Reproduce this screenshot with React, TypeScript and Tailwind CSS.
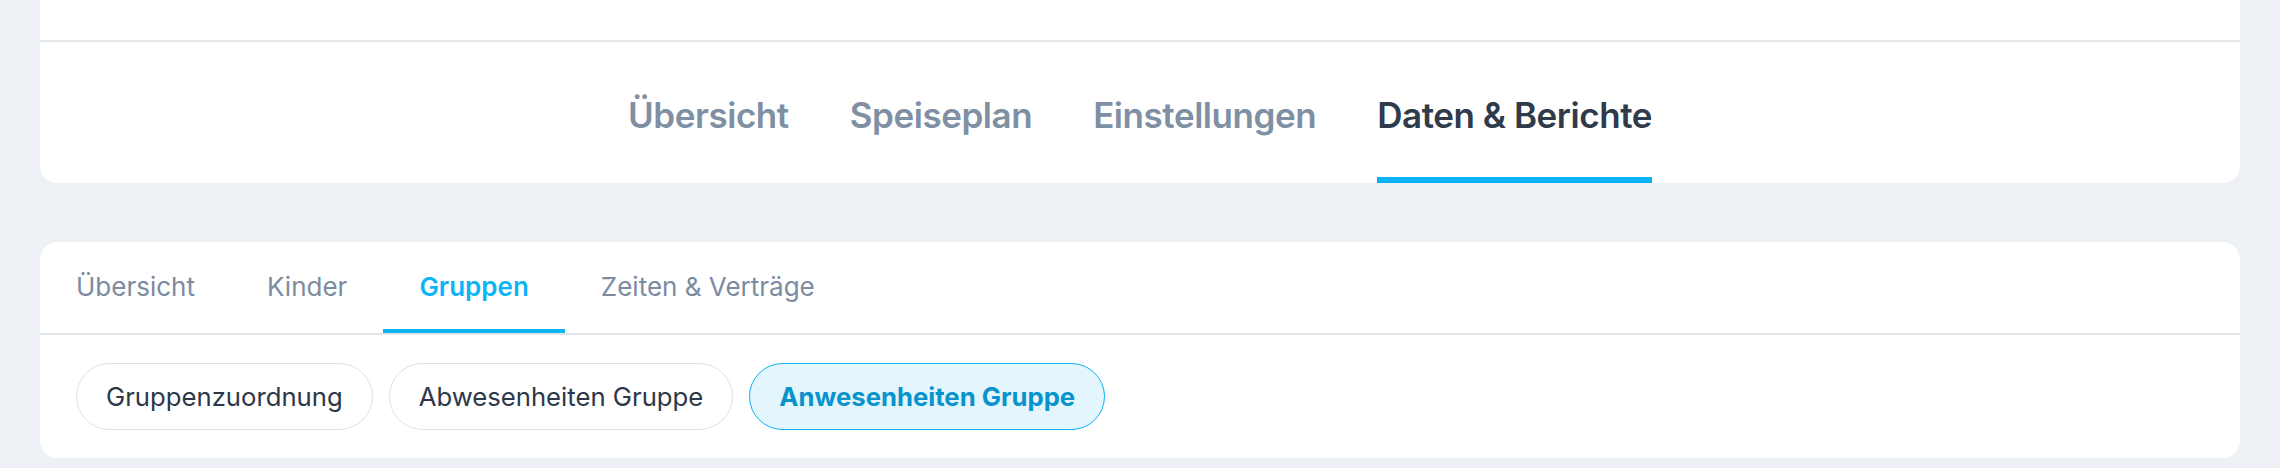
import React from "react";

const mainTabs = ["Übersicht", "Speiseplan", "Einstellungen", "Daten & Berichte"];
const subTabs = ["Übersicht", "Kinder", "Gruppen", "Zeiten & Verträge"];
const pills = ["Gruppenzuordnung", "Abwesenheiten Gruppe", "Anwesenheiten Gruppe"];

export default function App() {
  return (
    <div
      className="h-[468px] w-full bg-[#edf0f5] px-[40px] overflow-hidden"
      style={{ fontFamily: "Inter, 'Noto Sans', sans-serif" }}
    >
      {/* Top card */}
      <div className="bg-white rounded-b-[17px]">
        <div className="h-[42px] border-b-2 border-[#e5e8ec]" />
        <nav className="flex justify-center gap-[61px]">
          {mainTabs.map((t, i) => {
            const active = i === 3;
            return (
              <div
                key={t}
                className={
                  active
                    ? "pt-[52px] pb-[41px] border-b-[6px] border-[#0bb4f7] text-[35px] leading-[42px] font-semibold text-[#2f3a4b] tracking-[-0.45px]"
                    : "pt-[52px] pb-[41px] border-b-[6px] border-transparent text-[35px] leading-[42px] font-semibold text-[#7f8fa4] tracking-[-0.45px]"
                }
              >
                {t}
              </div>
            );
          })}
        </nav>
      </div>

      {/* Second card */}
      <div className="mt-[59px] bg-white rounded-[17px]">
        <div className="flex border-b-2 border-[#e3e7ec]">
          {subTabs.map((t, i) => {
            const active = i === 2;
            return (
              <div
                key={t + i}
                className={
                  active
                    ? "px-[36px] pt-[29px] pb-[26px] border-b-4 border-[#0bb4f7] text-[26px] leading-[32px] font-semibold text-[#0bb4f7]"
                    : "px-[36px] pt-[29px] pb-[26px] border-b-4 border-transparent text-[26px] leading-[32px] text-[#7b8ba0]"
                }
              >
                {t}
              </div>
            );
          })}
        </div>
        <div className="flex gap-[16px] px-[36px] pt-[28px] pb-[28px]">
          {pills.map((p, i) => {
            const active = i === 2;
            return (
              <div
                key={p}
                className={
                  active
                    ? "h-[67px] flex items-center px-[29px] rounded-full border-[1.5px] border-[#0bb4f7] bg-[#e3f5fd] text-[25.7px] leading-[32px] font-bold text-[#0893cc]"
                    : "h-[67px] flex items-center px-[29px] rounded-full border-[1.5px] border-[#dde2e8] bg-white text-[25.7px] leading-[32px] text-[#2d3748]"
                }
              >
                {p}
              </div>
            );
          })}
        </div>
      </div>
    </div>
  );
}
